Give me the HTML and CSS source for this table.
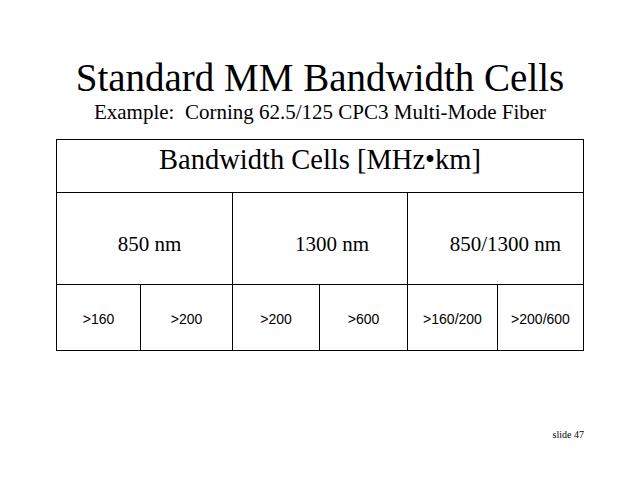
FILE: index.html
```html
<!DOCTYPE html>
<html lang="en">
<head>
<meta charset="utf-8">
<title>Standard MM Bandwidth Cells</title>
<link rel="stylesheet" href="styles.css">
</head>
<body>
<main class="slide">
  <h1 class="title">Standard MM Bandwidth Cells</h1>
  <p class="subtitle">Example:&nbsp; Corning 62.5/125 CPC3 Multi-Mode Fiber</p>
  <div class="cells">
    <div class="head">Bandwidth Cells [MHz•km]</div>
    <div class="wl wl-a">850 nm</div>
    <div class="wl wl-b">1300 nm</div>
    <div class="wl wl-c">850/1300 nm</div>
    <div class="val">&gt;160</div>
    <div class="val">&gt;200</div>
    <div class="val">&gt;200</div>
    <div class="val">&gt;600</div>
    <div class="val">&gt;160/200</div>
    <div class="val">&gt;200/600</div>
  </div>
  <footer class="slide-no">slide 47</footer>
</main>
</body>
</html>
```

FILE: styles.css
```css
html, body {
  margin: 0;
  padding: 0;
  background: #fff;
}

.slide {
  width: 640px;
  height: 480px;
  color: #000;
  font-family: "Liberation Serif", "Times New Roman", serif;
  display: flex;
  flex-direction: column;
}

.title {
  margin: 56px 0 0;
  font-size: 39px;
  font-weight: normal;
  line-height: 44px;
  text-align: center;
}

.subtitle {
  margin: 0;
  font-size: 21px;
  line-height: 24px;
  text-align: center;
}

.cells {
  margin: 15px 0 0 56px;
  width: 528px;
  box-sizing: border-box;
  display: grid;
  grid-template-columns: 83px 91px 86px 87px 89px 85px;
  grid-template-rows: 52px 91px 65px;
  gap: 1px;
  padding: 1px;
  background: #000;
}

.cells > div {
  background: #fff;
  text-align: center;
}

.head {
  grid-column: 1 / -1;
  font-size: 28.5px;
  line-height: 40px;
}

.wl {
  grid-column: span 2;
  font-size: 21px;
  line-height: 24px;
  padding-top: 39px;
}

.wl-a { padding-left: 10px; }
.wl-b { padding-left: 24px; }
.wl-c { padding-left: 20px; }

.val {
  font-family: "Liberation Sans", Arial, sans-serif;
  font-size: 14px;
  line-height: 16px;
  padding-top: 26px;
}

.slide-no {
  margin-top: 78px;
  padding-right: 56px;
  font-size: 10px;
  line-height: 12px;
  text-align: right;
}
```
